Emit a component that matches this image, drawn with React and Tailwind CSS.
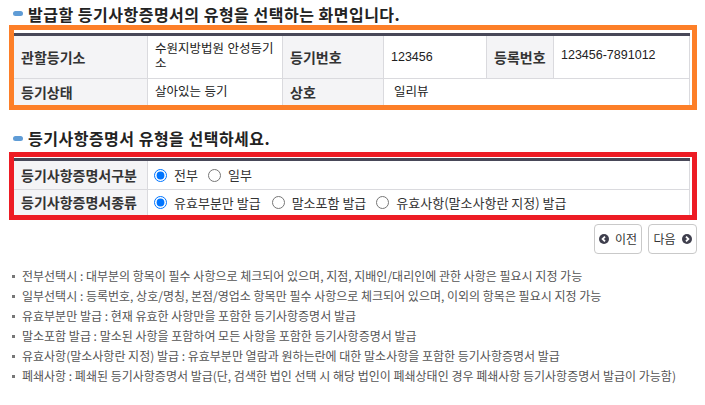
import React from 'react'

const notes = [
  '전부선택시 : 대부분의 항목이 필수 사항으로 체크되어 있으며, 지점, 지배인/대리인에 관한 사항은 필요시 지정 가능',
  '일부선택시 : 등록번호, 상호/명칭, 본점/영업소 항목만 필수 사항으로 체크되어 있으며, 이외의 항목은 필요시 지정 가능',
  '유효부분만 발급 : 현재 유효한 사항만을 포함한 등기사항증명서 발급',
  '말소포함 발급 : 말소된 사항을 포함하여 모든 사항을 포함한 등기사항증명서 발급',
  '유효사항(말소사항란 지정) 발급 : 유효부분만 열람과 원하는란에 대한 말소사항을 포함한 등기사항증명서 발급',
  '폐쇄사항 : 폐쇄된 등기사항증명서 발급(단, 검색한 법인 선택 시 해당 법인이 폐쇄상태인 경우 폐쇄사항 등기사항증명서 발급이 가능함)',
]

function Title({ children, className }) {
  return (
    <div className={`flex items-center ${className}`}>
      <span className="w-[10px] h-[5px] rounded-full bg-[#5f9cd6] ml-[4px] mr-[5px]" />
      <h2 className="text-[16px] leading-[20px] tracking-[0.5px] font-bold text-[#222]">{children}</h2>
    </div>
  )
}

function Label({ children, last }) {
  return (
    <td
      className={`bg-[#f4f4f6] border-r border-[#dadade] px-[7px] text-[14px] font-bold text-[#333] align-middle ${
        last ? '' : 'border-b'
      }`}
    >
      {children}
    </td>
  )
}

function Value({ children, colSpan, last }) {
  return (
    <td
      colSpan={colSpan}
      className={`border-r border-[#dadade] px-[7px] text-[12.5px] leading-[15px] text-[#222] font-['Liberation_Sans','Noto_Sans_CJK_KR',sans-serif] ${
        last ? '' : 'border-b'
      }`}
    >
      {children}
    </td>
  )
}

function Radio({ checked, name, label, className = '' }) {
  return (
    <label className={`flex items-center ${className}`}>
      <input
        type="radio"
        name={name}
        defaultChecked={checked}
        className="m-0 w-[13px] h-[13px] accent-[#0075ff]"
      />
      <span className="ml-[7px] text-[13px] text-[#333]">{label}</span>
    </label>
  )
}

function CircleArrow({ dir }) {
  return (
    <svg width="10" height="10" viewBox="0 0 10 10">
      <circle cx="5" cy="5" r="5" fill="#3f3f4d" />
      {dir === 'left' ? (
        <path d="M6 2.6 L3.6 5 L6 7.4" stroke="#fff" strokeWidth="1.8" fill="none" />
      ) : (
        <path d="M4 2.6 L6.4 5 L4 7.4" stroke="#fff" strokeWidth="1.8" fill="none" />
      )}
    </svg>
  )
}

export default function App() {
  return (
    <div className="w-[705px] h-[405px] bg-white pl-[9px] font-['Noto_Sans_CJK_KR',sans-serif] overflow-hidden">
      <Title className="h-[25px] pt-[2px]">발급할 등기사항증명서의 유형을 선택하는 화면입니다.</Title>

      {/* 기본 정보 */}
      <div className="w-[688px] border-[5px] border-[#fd7f28] pt-[3px] pr-[2px]">
        <table className="w-full table-fixed border-separate border-spacing-0 border-t-[3px] border-[#484858]">
          <colgroup>
            <col className="w-[134px]" />
            <col className="w-[135px]" />
            <col className="w-[101px]" />
            <col className="w-[103px]" />
            <col className="w-[67px]" />
            <col />
          </colgroup>
          <tbody>
            <tr className="h-[43px]">
              <Label>관할등기소</Label>
              <Value>수원지방법원 안성등기소</Value>
              <Label>등기번호</Label>
              <Value>123456</Value>
              <Label>등록번호</Label>
              <Value>
                <div className="-mt-[4px]">123456-7891012</div>
              </Value>
            </tr>
            <tr className="h-[26px]">
              <Label last>등기상태</Label>
              <Value last>살아있는 등기</Value>
              <Label last>상호</Label>
              <Value colSpan={3} last>
                <span className="pl-[3px]">일리뷰</span>
              </Value>
            </tr>
          </tbody>
        </table>
      </div>

      <Title className="h-[42px] pt-[14px]">등기사항증명서 유형을 선택하세요.</Title>

      {/* 유형 선택 */}
      <div className="w-[688px] border-[5px] border-[#ed1c24] pt-[1px] pr-[2px]">
        <table className="w-full table-fixed border-separate border-spacing-0 border-t-[3px] border-[#484858]">
          <colgroup>
            <col className="w-[134px]" />
            <col />
          </colgroup>
          <tbody>
            <tr className="h-[29px]">
              <Label>등기사항증명서구분</Label>
              <td className="border-r border-b border-[#dadade] pl-[6px]">
                <div className="flex items-center">
                  <Radio name="gubun" checked label="전부" />
                  <Radio name="gubun" label="일부" className="ml-[10px]" />
                </div>
              </td>
            </tr>
            <tr className="h-[25px]">
              <Label last>등기사항증명서종류</Label>
              <td className="border-r border-[#dadade] pl-[6px]">
                <div className="flex items-center">
                  <Radio name="kind" checked label="유효부분만 발급" />
                  <Radio name="kind" label="말소포함 발급" className="ml-[11px]" />
                  <Radio name="kind" label="유효사항(말소사항란 지정) 발급" className="ml-[10px]" />
                </div>
              </td>
            </tr>
          </tbody>
        </table>
      </div>

      <div className="flex justify-end gap-[6px] pr-[8px] mt-[4px]">
        <button className="w-[48px] h-[30px] flex items-center justify-center gap-[6px] border border-[#c9c9c9] rounded-[4px] bg-white text-[12px] text-[#333]">
          <CircleArrow dir="left" />
          이전
        </button>
        <button className="w-[49px] h-[30px] flex items-center justify-center gap-[6px] border border-[#c9c9c9] rounded-[4px] bg-white text-[12px] text-[#333]">
          다음
          <CircleArrow dir="right" />
        </button>
      </div>

      <ul className="mt-[12px]">
        {notes.map((n) => (
          <li key={n} className="flex items-center h-[20px] text-[12px] text-[#555] whitespace-nowrap">
            <span className="w-[3px] h-[3px] bg-[#777] ml-[3px] mr-[7px] shrink-0" />
            {n}
          </li>
        ))}
      </ul>
    </div>
  )
}
